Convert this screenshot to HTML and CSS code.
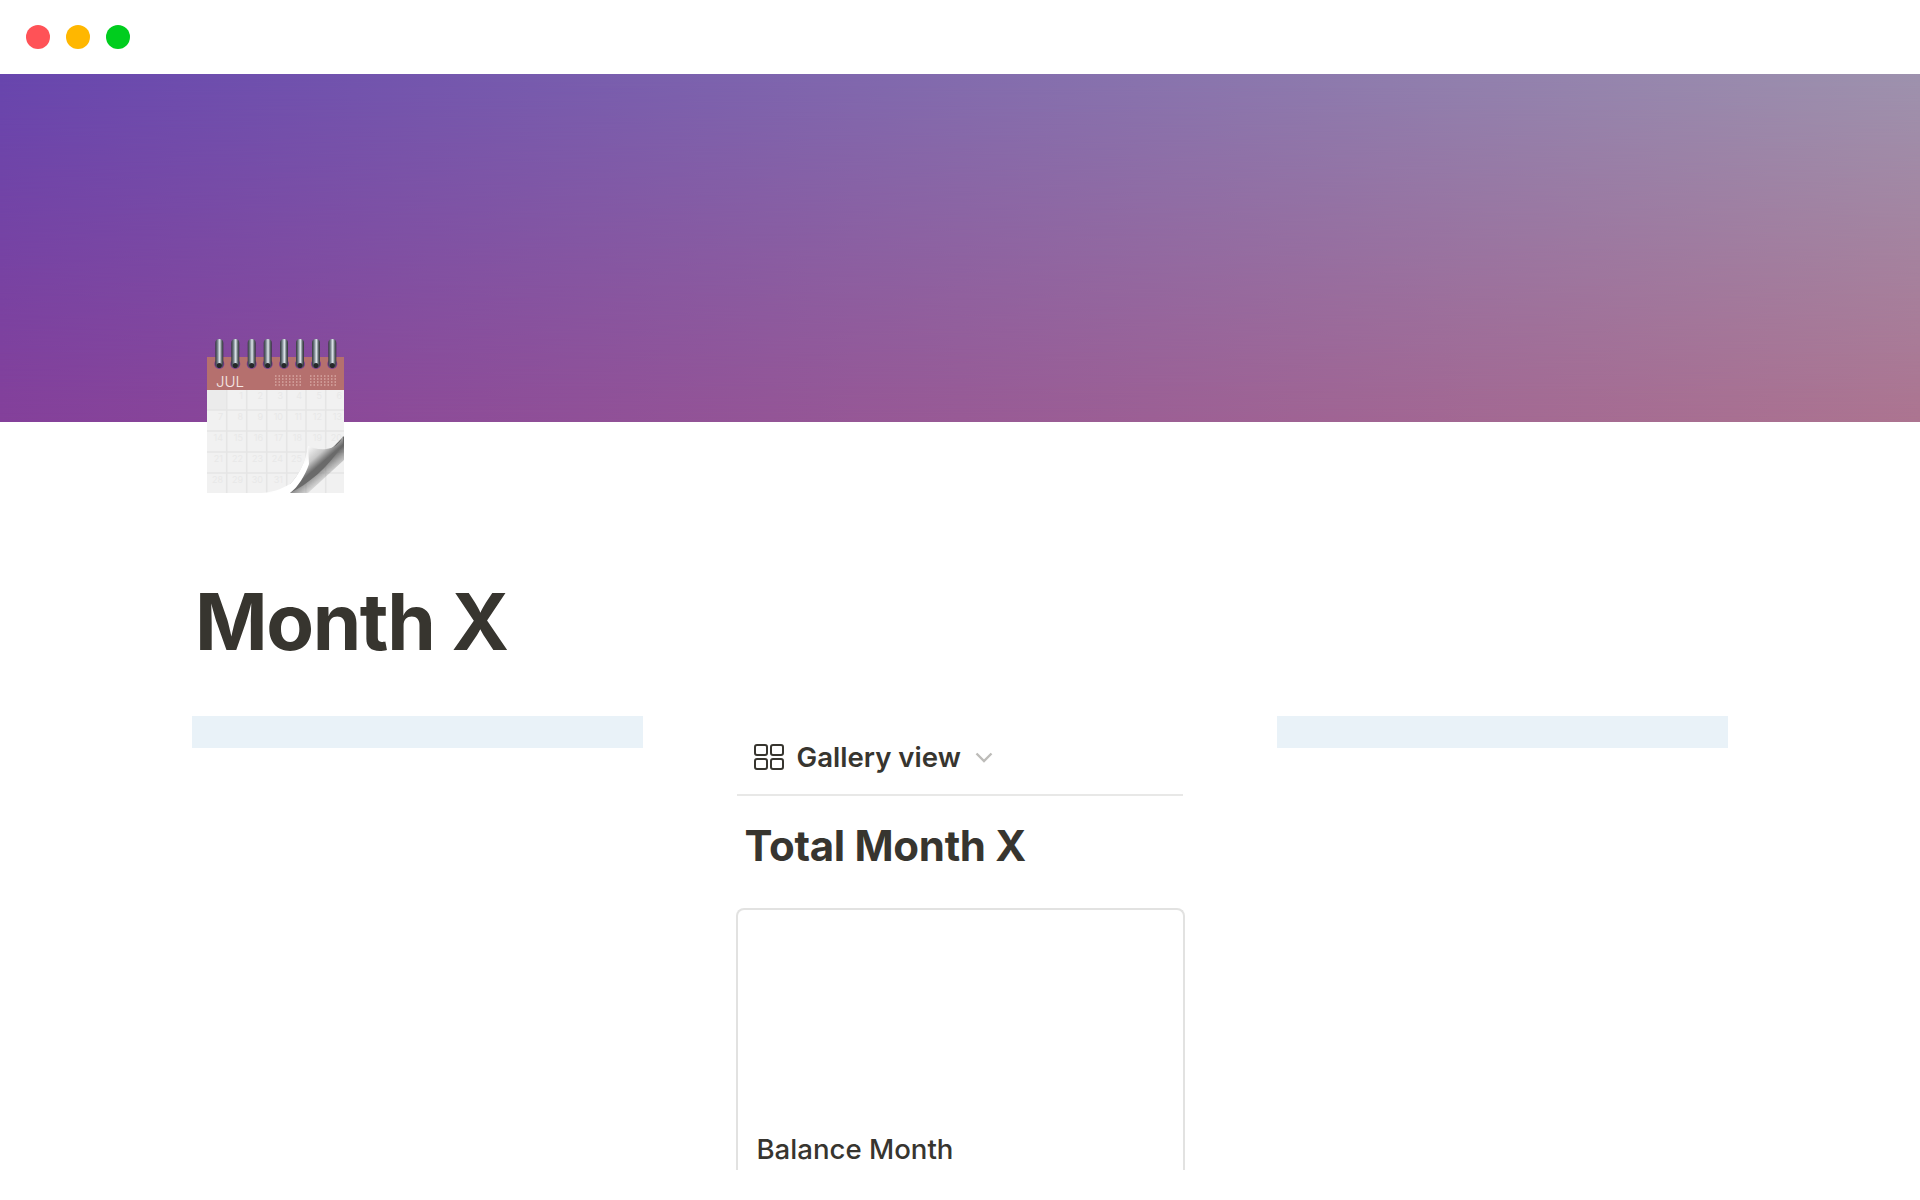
FILE: index.html
```html
<!DOCTYPE html>
<html lang="en">

<head>
    <meta charset="UTF-8">
    <meta name="viewport" content="width=device-width, initial-scale=1.0">
    <title>Month X</title>
    <link rel="stylesheet" href="styles.css">
</head>

<body>
    <div class="titlebar">
        <span class="dot dot-red"></span>
        <span class="dot dot-yellow"></span>
        <span class="dot dot-green"></span>
    </div>

    <div class="cover"></div>

    <div class="page">
        <svg class="page-icon" width="140" height="160" viewBox="0 0 140 160">
            <defs>
                <linearGradient id="ring" x1="0" y1="0" x2="1" y2="0">
                    <stop offset="0" stop-color="#34383c" />
                    <stop offset="0.25" stop-color="#6c7780" />
                    <stop offset="0.55" stop-color="#dfe7ec" />
                    <stop offset="0.8" stop-color="#626a70" />
                    <stop offset="1" stop-color="#2e3134" />
                </linearGradient>
                <linearGradient id="flap" gradientUnits="userSpaceOnUse" x1="96" y1="114" x2="110" y2="130">
                    <stop offset="0" stop-color="#fafafa" />
                    <stop offset="0.6" stop-color="#c8c8c8" />
                    <stop offset="1" stop-color="#6a6a6a" />
                </linearGradient>
                <linearGradient id="shadow" gradientUnits="userSpaceOnUse" x1="110" y1="130" x2="122" y2="145">
                    <stop offset="0" stop-color="#505050" stop-opacity="0.85" />
                    <stop offset="1" stop-color="#909090" stop-opacity="0" />
                </linearGradient>
                <linearGradient id="glow" gradientUnits="userSpaceOnUse" x1="74" y1="124" x2="94" y2="146">
                    <stop offset="0" stop-color="#ffffff" stop-opacity="0" />
                    <stop offset="0.6" stop-color="#ffffff" />
                </linearGradient>
                <clipPath id="sheet">
                    <rect x="1" y="52" width="137" height="103" />
                </clipPath>
                <filter id="soft" x="-10%" y="-10%" width="120%" height="120%">
                    <feGaussianBlur stdDeviation="0.6" />
                </filter>
            </defs>

            <rect x="1" y="19" width="137" height="33" fill="#b5706e" />
            <rect x="1" y="52" width="137" height="103" fill="#f1f1f1" />
            <rect x="1" y="52" width="20" height="20" fill="#ebebeb" />

            <g class="cal-grid">
                <path d="M20.7 52V155M40.7 52V155M60.7 52V155M80.7 52V155M100 52V155M119.7 52V155" />
                <path d="M1 72H138M1 93H138M1 114H138M1 135H138" />
            </g>

            <g class="cal-nums">
                <text x="37" y="61">1</text>
                <text x="57" y="61">2</text>
                <text x="77" y="61">3</text>
                <text x="96" y="61">4</text>
                <text x="116" y="61">5</text>
                <text x="136" y="61">6</text>
                <text x="17" y="82">7</text>
                <text x="37" y="82">8</text>
                <text x="57" y="82">9</text>
                <text x="77" y="82">10</text>
                <text x="96" y="82">11</text>
                <text x="116" y="82">12</text>
                <text x="136" y="82">13</text>
                <text x="17" y="103">14</text>
                <text x="37" y="103">15</text>
                <text x="57" y="103">16</text>
                <text x="77" y="103">17</text>
                <text x="96" y="103">18</text>
                <text x="116" y="103">19</text>
                <text x="136" y="103">20</text>
                <text x="17" y="124">21</text>
                <text x="37" y="124">22</text>
                <text x="57" y="124">23</text>
                <text x="77" y="124">24</text>
                <text x="96" y="124">25</text>
                <text x="17" y="145">28</text>
                <text x="37" y="145">29</text>
                <text x="57" y="145">30</text>
                <text x="77" y="145">31</text>
            </g>

            <text class="cal-month" x="10" y="49">JUL</text>
            <path class="cal-mini" d="M69 38h27M69 41h27M69 44h27M69 47h27M104 38h28M104 41h28M104 44h28M104 47h28" />

            <g clip-path="url(#sheet)">
                <path d="M138 98V122L102 155H82Z" fill="url(#shadow)" filter="url(#soft)" />
                <path d="M137 98C134 106 128 110 120 111C113 112 107 110 102 108C100 124 92 138 84 146L82 155H84C102 146 122 130 137 106Z" fill="url(#flap)" filter="url(#soft)" />
                <path d="M102 108C100 124 92 138 84 146C74 152 66 154 56 155H84C92 149 99 138 103 126Z" fill="url(#glow)" />
            </g>

            <g class="cal-holes">
                <circle cx="13.3" cy="26" r="5" />
                <circle cx="29.3" cy="26" r="5" />
                <circle cx="45.7" cy="26" r="5" />
                <circle cx="61.7" cy="26" r="5" />
                <circle cx="78" cy="26" r="5" />
                <circle cx="94" cy="26" r="5" />
                <circle cx="110" cy="26" r="5" />
                <circle cx="126.3" cy="26" r="5" />
            </g>
            <g fill="url(#ring)">
                <rect x="9.3" y="1" width="8" height="29" rx="4" />
                <rect x="25.3" y="1" width="8" height="29" rx="4" />
                <rect x="41.7" y="1" width="8" height="29" rx="4" />
                <rect x="57.7" y="1" width="8" height="29" rx="4" />
                <rect x="74" y="1" width="8" height="29" rx="4" />
                <rect x="90" y="1" width="8" height="29" rx="4" />
                <rect x="106" y="1" width="8" height="29" rx="4" />
                <rect x="122.3" y="1" width="8" height="29" rx="4" />
            </g>
            <g class="cal-ring-ends">
                <circle cx="13.3" cy="27.5" r="2.6" />
                <circle cx="29.3" cy="27.5" r="2.6" />
                <circle cx="45.7" cy="27.5" r="2.6" />
                <circle cx="61.7" cy="27.5" r="2.6" />
                <circle cx="78" cy="27.5" r="2.6" />
                <circle cx="94" cy="27.5" r="2.6" />
                <circle cx="110" cy="27.5" r="2.6" />
                <circle cx="126.3" cy="27.5" r="2.6" />
            </g>
        </svg>

        <h1 class="page-title">Month X</h1>

        <div class="columns">
            <div class="callout"></div>

            <div class="col-mid">
                <div class="view-tabs">
                    <svg class="view-icon" width="30" height="26" viewBox="0 0 30 26">
                        <rect x="1" y="1" width="12" height="10" rx="2" />
                        <rect x="17" y="1" width="12" height="10" rx="2" />
                        <rect x="1" y="15" width="12" height="10" rx="2" />
                        <rect x="17" y="15" width="12" height="10" rx="2" />
                    </svg>
                    <span class="view-name">Gallery view</span>
                    <svg class="view-caret" width="18" height="11" viewBox="0 0 18 11">
                        <path d="M1.5 1.5L9 9L16.5 1.5" />
                    </svg>
                </div>

                <h2 class="db-title">Total Month X</h2>

                <div class="card">
                    <div class="card-name">Balance Month</div>
                </div>
            </div>

            <div class="callout"></div>
        </div>
    </div>
</body>

</html>
```

FILE: styles.css
```css
body {
    margin: 0;
    padding: 0;
    height: 1200px;
    overflow: hidden;
    background-color: #fff;
    color: #37352f;
    font-family: Inter, "Liberation Sans", sans-serif;
}

.titlebar {
    height: 74px;
    display: flex;
    align-items: center;
    gap: 16px;
    padding-left: 26px;
    box-sizing: border-box;
}

.dot {
    width: 24px;
    height: 24px;
    border-radius: 50%;
}

.dot-red {
    background-color: #ff5257;
}

.dot-yellow {
    background-color: #ffb700;
}

.dot-green {
    background-color: #00cd1e;
}

.cover {
    height: 348px;
    background: linear-gradient(to right, #6846ae 0%, #9e92ae 100%);
    position: relative;
}

.cover::after {
    content: "";
    position: absolute;
    inset: 0;
    background: linear-gradient(to right, #84409a 0%, #ac7490 100%);
    -webkit-mask-image: linear-gradient(to bottom, transparent, #000);
    mask-image: linear-gradient(to bottom, transparent, #000);
}

.page {
    position: relative;
    padding: 0 192px;
}

.page-icon {
    display: block;
    margin: -84px 0 0 14px;
}

.cal-grid path {
    fill: none;
    stroke: #e5e5e5;
    stroke-width: 1.5;
}

.cal-nums text {
    font-size: 9px;
    fill: #e8e8e8;
    text-anchor: end;
}

.cal-month {
    font-size: 15px;
    font-weight: 300;
    fill: #f6e8e6;
}

.cal-mini {
    fill: none;
    stroke: #d6a6a2;
    stroke-width: 1.4;
    stroke-dasharray: 1.5 2;
}

.cal-holes circle {
    fill: #7a3f92;
}

.cal-ring-ends circle {
    fill: #26282a;
}

.page-title {
    margin: 77px 0 0 3px;
    font-size: 78px;
    line-height: 94px;
    font-weight: 700;
    letter-spacing: -1.4px;
}

.columns {
    display: grid;
    grid-template-columns: 451px 449px 451px;
    justify-content: space-between;
    margin-top: 47px;
}

.callout {
    height: 32px;
    background-color: #e9f2f8;
}

.view-tabs {
    height: 80px;
    display: flex;
    align-items: center;
    padding: 4px 0 0 17px;
    border-bottom: 2px solid #e8e8e7;
    box-sizing: border-box;
    margin: 0 2px 0 1px;
}

.view-icon rect {
    fill: none;
    stroke: #37352f;
    stroke-width: 2;
}

.view-name {
    margin-left: 13px;
    font-size: 27.6px;
    font-weight: 600;
}

.view-caret {
    margin-left: 14px;
}

.view-caret path {
    fill: none;
    stroke: #bdbcb9;
    stroke-width: 2.4;
}

.db-title {
    margin: 24px 0 0 9px;
    font-size: 42px;
    line-height: 52px;
    font-weight: 700;
    letter-spacing: -0.3px;
}

.card {
    height: 262px;
    margin-top: 36px;
    padding: 0 0 3px 19px;
    border: 2px solid #e2e2e1;
    border-bottom: none;
    border-radius: 8px 8px 0 0;
    box-sizing: border-box;
    display: flex;
    flex-direction: column;
    justify-content: flex-end;
}

.card-name {
    font-size: 27.6px;
    line-height: 36px;
    font-weight: 500;
}
```
